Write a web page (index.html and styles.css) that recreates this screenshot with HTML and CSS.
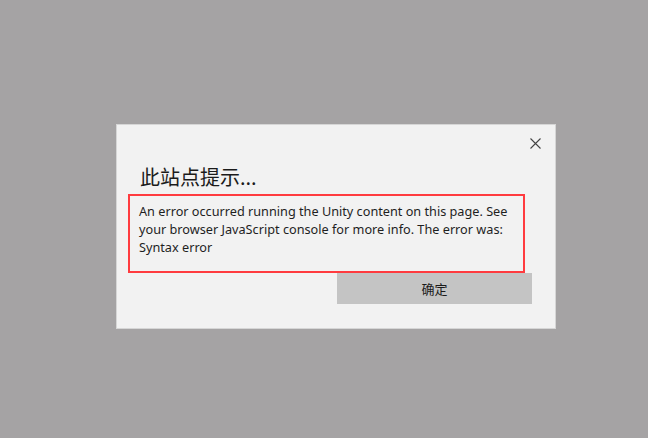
FILE: index.html
```html
<!DOCTYPE html>
<html lang="zh-CN">
<head>
    <meta charset="UTF-8">
    <title>此站点提示...</title>
    <link rel="stylesheet" href="styles.css">
</head>
<body>
    <div class="dialog">
        <div class="dialog-top">
            <button class="close" aria-label="关闭">
                <svg width="11" height="11" viewBox="0 0 11 11">
                    <path d="M0.5 0.5 L10.5 10.5 M10.5 0.5 L0.5 10.5" stroke="#444" stroke-width="1.1" fill="none"/>
                </svg>
            </button>
        </div>
        <h1 class="title">此站点提示...</h1>
        <div class="message">
            An error occurred running the Unity content on this page. See your browser JavaScript console for more info. The error was:<br>
            Syntax error
        </div>
        <div class="actions">
            <button class="ok">确定</button>
        </div>
    </div>
</body>
</html>
```

FILE: styles.css
```css
body {
    margin: 0;
    padding: 124px 0 0 116px;
    background: #a5a3a4;
    font-family: "Noto Sans", "Noto Sans CJK SC", sans-serif;
}
.dialog {
    box-sizing: border-box;
    width: 440px;
    height: 205px;
    padding: 0 23px;
    background: #f2f2f2;
    border: 1px solid #d6d6d6;
}
.dialog-top {
    display: flex;
    justify-content: flex-end;
    height: 39px;
    padding-top: 13px;
    box-sizing: border-box;
    margin-right: -9px;
}
.close {
    width: 11px;
    height: 11px;
    padding: 0;
    border: none;
    background: none;
    display: flex;
}
.title {
    margin: 0;
    font-family: "Noto Sans CJK SC", sans-serif;
    font-weight: normal;
    font-size: 20px;
    line-height: 26px;
    color: #1b1b1b;
    height: 30px;
}
.message {
    box-sizing: border-box;
    width: 397px;
    height: 79px;
    margin-left: -12px;
    padding: 6px 0 0 9px;
    border: 2px solid #ff3b3f;
    font-size: 12.7px;
    line-height: 18px;
    color: #1f1f1f;
}
.actions {
    display: flex;
    justify-content: flex-end;
}
.ok {
    width: 195px;
    height: 31px;
    border: none;
    background: #c4c4c4;
    font-family: "Noto Sans CJK SC", sans-serif;
    font-size: 13px;
    color: #1b1b1b;
    padding: 0;
}
```
